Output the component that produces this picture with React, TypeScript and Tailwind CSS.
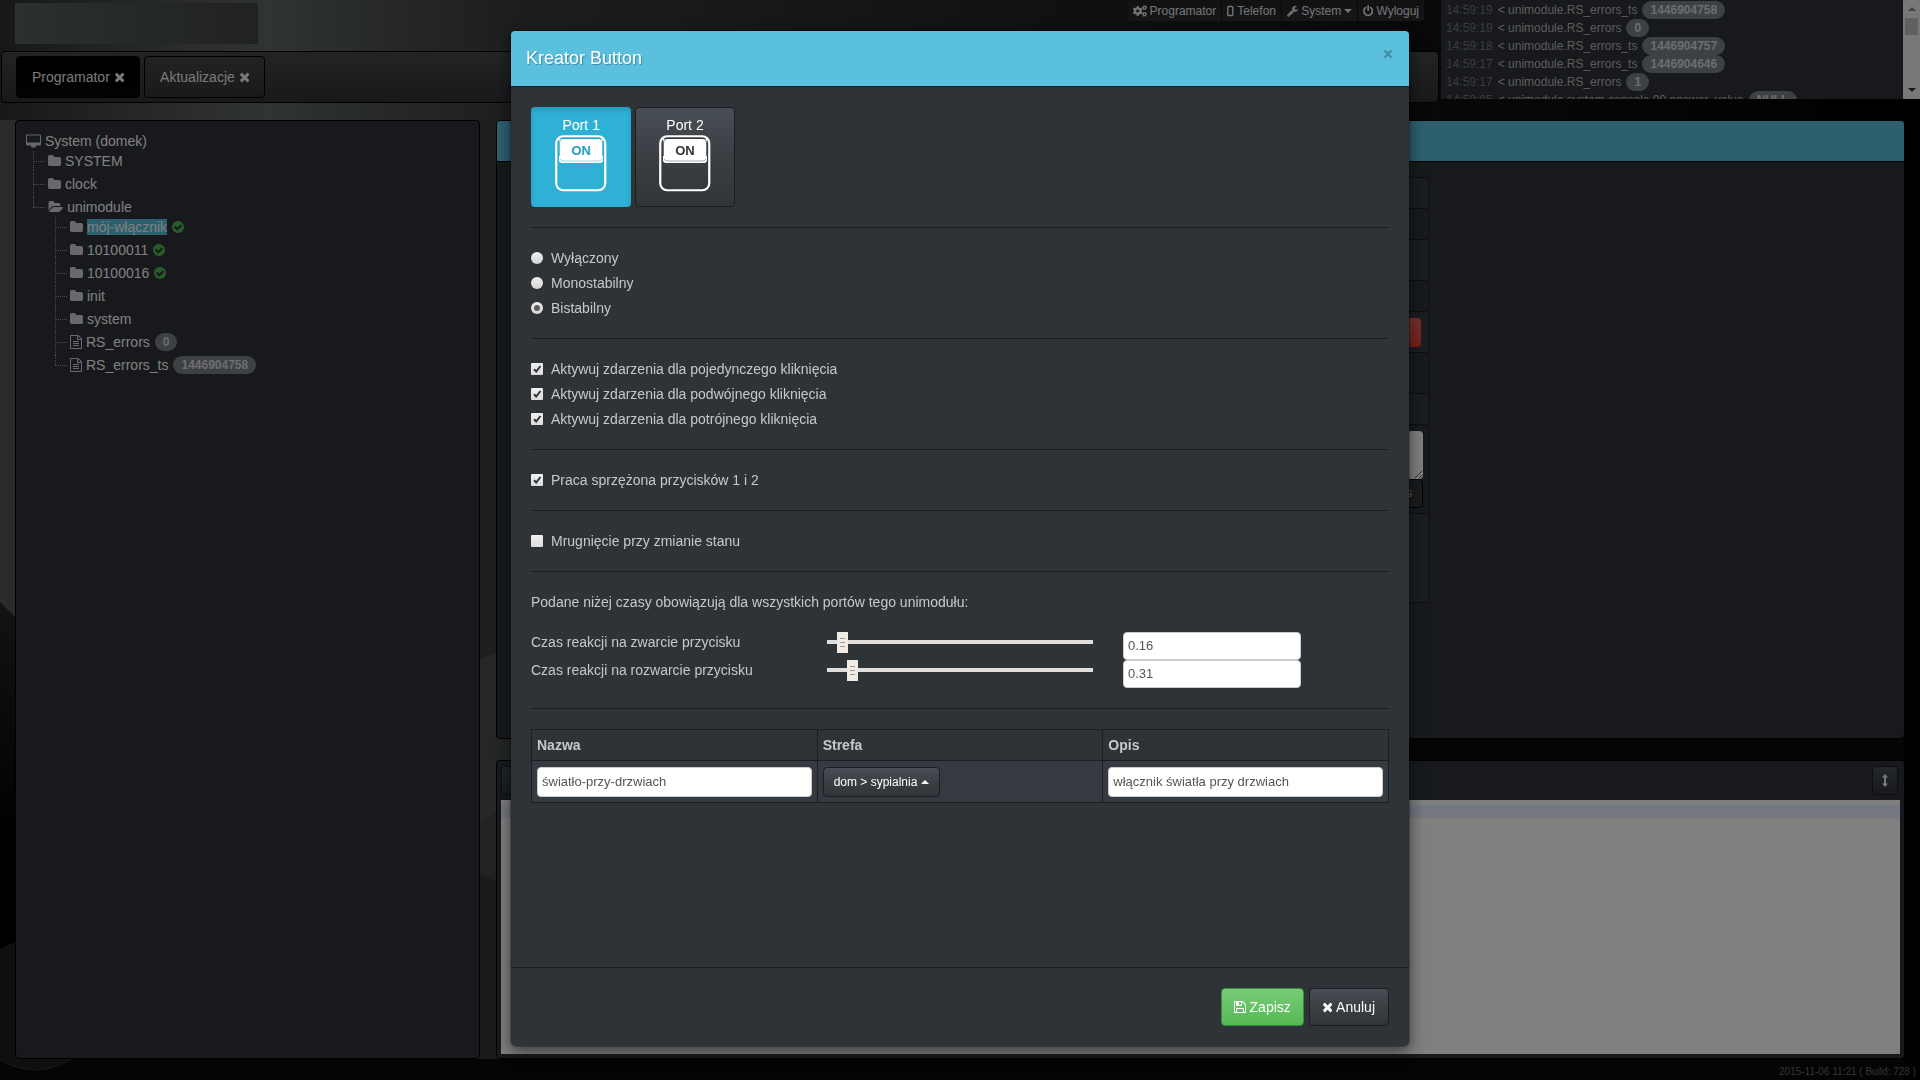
import React, { useState } from "react";
import { FaCogs } from "react-icons/fa";

const PATHS = {
  times:
    "M1490 1322q0 40-28 68l-136 136q-28 28-68 28t-68-28l-294-294-294 294q-28 28-68 28t-68-28l-136-136q-28-28-28-68t28-68l294-294-294-294q-28-28-28-68t28-68l136-136q28-28 68-28t68 28l294 294 294-294q28-28 68-28t68 28l136 136q28 28 28 68t-28 68l-294 294 294 294q28 28 28 68z",
  wrench:
    "M448 1472q0-26-19-45t-45-19-45 19-19 45 19 45 45 19 45-19 19-45zm644-420l-682 682q-37 37-90 37-52 0-91-37l-106-108q-38-36-38-90 0-53 38-91l681-681q39 98 114.500 173.500t173.500 114.500zm634-435q0 39-23 106-47 134-164.500 217.500t-258.500 83.500q-185 0-316.500-131.500t-131.500-316.500 131.500-316.500 316.500-131.500q58 0 121.500 16.500t107.500 46.500q16 11 16 28t-16 28l-293 169v224l193 107q5-3 79-48.500t135.500-81 70.500-35.500q15 0 23.500 10t8.500 25z",
  power:
    "M1664 896q0 156-61 298t-164 245-245 164-298 61-298-61-245-164-164-245-61-298q0-182 80.500-343t226.500-270q43-32 95.500-25t83.500 50q32 42 24.500 94.500t-49.500 84.500q-98 74-151.500 181t-53.500 228q0 104 40.500 198.500t109.500 163.500 163.500 109.500 198.500 40.500 198.500-40.500 163.500-109.500 109.500-163.500 40.500-198.500q0-121-53.500-228t-151.500-181q-42-32-49.500-84.500t24.500-94.500q31-43 84-50t95 25q146 109 226.500 270t80.500 343zm-640-768v640q0 52-38 90t-90 38-90-38-38-90v-640q0-52 38-90t90-38 90 38 38 90z",
  desktop:
    "M1728 992v-832q0-13-9.500-22.500t-22.500-9.500h-1600q-13 0-22.500 9.500t-9.500 22.500v832q0 13 9.500 22.500t22.500 9.500h1600q13 0 22.500-9.500t9.500-22.500zm128-832v1088q0 66-47 113t-113 47h-544q0 37 16 77.500t32 71 16 43.500q0 26-19 45t-45 19h-512q-26 0-45-19t-19-45q0-14 16-44t32-70 16-78h-544q-66 0-113-47t-47-113v-1088q0-66 47-113t113-47h1600q66 0 113 47t47 113z",
  folder:
    "M1728 608v704q0 92-66 158t-158 66h-1216q-92 0-158-66t-66-158v-960q0-92 66-158t158-66h320q92 0 158 66t66 158v32h672q92 0 158 66t66 158z",
  folderOpen:
    "M1943 952q0 31-31 66l-336 396q-43 51-120.500 86.500t-143.500 35.500h-1088q-34 0-60.500-13t-26.500-43q0-31 31-66l336-396q43-51 120.500-86.500t143.500-35.500h1088q34 0 60.500 13t26.500 43zm-343-344v160h-832q-94 0-197 47.500t-164 119.500l-337 396-5 6q0-4-.5-12.500t-.5-12.500v-960q0-92 66-158t158-66h320q92 0 158 66t66 158v32h544q92 0 158 66t66 158z",
  check:
    "M1412 734q0-28-18-46l-91-90q-19-19-45-19t-45 19l-408 407-226-226q-19-19-45-19t-45 19l-91 90q-18 18-18 46 0 27 18 45l362 362q19 19 45 19 27 0 46-19l543-543q18-18 18-45zm252 162q0 209-103 385.500t-279.500 279.500-385.500 103-385.500-103-279.500-279.500-103-385.500 103-385.500 279.500-279.500 385.500-103 385.500 103 279.500 279.500 103 385.500z",
  file:
    "M1596 380q28 28 48 76t20 88v1152q0 40-28 68t-68 28h-1344q-40 0-68-28t-28-68v-1600q0-40 28-68t68-28h896q40 0 88 20t76 48zm-444-244v376h376q-10-29-22-41l-313-313q-12-12-41-22zm384 1528v-1024h-416q-40 0-68-28t-28-68v-416h-768v1536h1280zm-1024-864q0-14 9-23t23-9h704q14 0 23 9t9 23v64q0 14-9 23t-23 9h-704q-14 0-23-9t-9-23v-64zm736 224q14 0 23 9t9 23v64q0 14-9 23t-23 9h-704q-14 0-23-9t-9-23v-64q0-14 9-23t23-9h704zm0 256q14 0 23 9t9 23v64q0 14-9 23t-23 9h-704q-14 0-23-9t-9-23v-64q0-14 9-23t23-9h704z",
  save:
    "M512 1536h768v-384h-768v384zm896 0h128v-896q0-14-10-38.500t-20-34.500l-281-281q-10-10-34-20t-39-10v416q0 40-28 68t-68 28h-576q-40 0-68-28t-28-68v-416h-128v1280h128v-416q0-40 28-68t68-28h832q40 0 68 28t28 68v416zm-384-928v-320q0-13-9.500-22.500t-22.500-9.500h-192q-13 0-22.500 9.500t-9.500 22.500v320q0 13 9.500 22.500t22.500 9.500h192q13 0 22.500-9.500t9.500-22.500zm640 32v928q0 40-28 68t-68 28h-1344q-40 0-68-28t-28-68v-1344q0-40 28-68t68-28h928q40 0 88 20t76 48l280 280q28 28 48 76t20 88z",
};

const VIEW: Record<keyof typeof PATHS, string> = {
  times: "302 0 1188 1792",
  wrench: "64 0 1664 1792",
  power: "128 0 1536 1792",
  desktop: "-64 -64 1920 1792",
  folder: "64 0 1664 1792",
  folderOpen: "0 0 1943 1792",
  check: "128 0 1536 1792",
  file: "128 0 1536 1792",
  save: "128 0 1536 1792",
};

function Glyph({ name, className = "h-3.5" }: { name: keyof typeof PATHS; className?: string }) {
  return (
    <svg viewBox={VIEW[name]} className={`w-auto shrink-0 fill-current ${className}`} aria-hidden="true">
      <path d={PATHS[name]} />
    </svg>
  );
}

function Badge({ children }: { children: React.ReactNode }) {
  return (
    <span className="rounded-full bg-[#7a8288] px-2 py-[3px] text-xs leading-3 font-bold text-[#d8dade]">{children}</span>
  );
}

function Backdrop() {
  return (
    <svg className="absolute inset-0 h-full w-full" viewBox="0 0 1920 1080" preserveAspectRatio="none" aria-hidden="true">
      <defs>
        <linearGradient id="top" x1="0" x2="1" y1="0" y2="0">
          <stop offset="0" stopColor="#2e3032" />
          <stop offset=".07" stopColor="#4a4d50" />
          <stop offset=".14" stopColor="#62676a" />
          <stop offset=".2" stopColor="#4c5052" />
          <stop offset=".27" stopColor="#3a3b3d" />
          <stop offset=".45" stopColor="#2a2a2b" />
          <stop offset=".75" stopColor="#101010" />
          <stop offset="1" stopColor="#000" />
        </linearGradient>
        <linearGradient id="dark" x1="0" x2="0" y1="0" y2="1">
          <stop offset="0" stopColor="#262728" />
          <stop offset=".5" stopColor="#000" />
          <stop offset="1" stopColor="#000" />
        </linearGradient>
      </defs>
      <rect width="1920" height="1080" fill="url(#top)" />
      <rect y="120" width="300" height="500" fill="#545858" />
      <path d="M0 602L16 618V1080H0Z" fill="url(#dark)" />
      <rect x="480" y="120" width="16" height="960" fill="#3c3e3f" />
      <path d="M480 659L496 653V812L480 824Z" fill="#4c5051" />
      <path d="M480 824L496 812V881L480 873Z" fill="#424646" />
      <path d="M480 873L496 881V1080H480Z" fill="#353637" />
      <rect x="488" y="738" width="300" height="22" fill="#484c4c" />
      <rect x="1300" y="738" width="620" height="22" fill="#0a0a0a" />
      <rect y="1059" width="1920" height="21" fill="#080809" />
      <rect x="1904" y="100" width="16" height="980" fill="#000" />
      <circle cx="35" cy="1005" r="65" fill="#1f1f20" stroke="#343435" />
    </svg>
  );
}

const TABS = [
  { label: "Programator", active: true },
  { label: "Aktualizacje", active: false },
];

const LOG: [string, string, string][] = [
  ["14:59:19", "unimodule.RS_errors_ts", "1446904758"],
  ["14:59:19", "unimodule.RS_errors", "0"],
  ["14:59:18", "unimodule.RS_errors_ts", "1446904757"],
  ["14:59:17", "unimodule.RS_errors_ts", "1446904646"],
  ["14:59:17", "unimodule.RS_errors", "1"],
  ["14:59:05", "unimodule.system.console.00.answer_value", "NULL"],
];

function TopBar() {
  const item = "flex h-[21px] items-center gap-[3px] border-r border-black/60 px-[5px] last:border-r-0";
  return (
    <header className="relative flex">
      <div className="flex min-w-0 flex-1 flex-col">
        <div className="flex h-[51px] items-start justify-between pr-[17px] pl-[15px]">
          <div className="mt-[3px] h-[41px] w-[243px] bg-linear-to-r from-[#5a5f61] via-[#4c5154] to-[#404346]" />
          <nav className="flex rounded-b bg-linear-to-b from-[#222325] to-[#2c2e31] text-xs text-[#e8e8e8]">
            <a href="#programator" className={item}>
              <FaCogs className="size-3.5" />
              Programator
            </a>
            <a href="#telefon" className={item}>
              <svg viewBox="0 0 7 12" className="h-3 w-[7px]" aria-hidden="true">
                <rect x=".75" y="1.5" width="5" height="9" rx="1" fill="none" stroke="currentColor" strokeWidth="1.4" />
              </svg>
              Telefon
            </a>
            <a href="#system" className={item}>
              <Glyph name="wrench" className="h-3" />
              System
              <span className="border-x-4 border-t-4 border-x-transparent border-t-current" />
            </a>
            <a href="#wyloguj" className={item}>
              <Glyph name="power" className="h-3" />
              Wyloguj
            </a>
          </nav>
        </div>
        <nav className="mr-[2px] ml-px flex h-[52px] gap-1 rounded border border-black bg-linear-to-b from-[#45474b] to-[#303235] px-3.5 py-1">
          {TABS.map((tab) => (
            <div
              key={tab.label}
              className={
                tab.active
                  ? "flex items-center gap-[5px] rounded border border-black bg-linear-to-b from-[#000] to-[#080808] px-[15px] text-sm text-[#f0f0f0]"
                  : "flex items-center gap-[5px] rounded border border-black px-[15px] text-sm text-[#f0f0f0]"
              }
            >
              <a href={`#${tab.label}`}>{tab.label}</a>
              <button type="button" aria-label={`Zamknij ${tab.label}`}>
                <Glyph name="times" />
              </button>
            </div>
          ))}
        </nav>
      </div>
      <section className="flex h-[99px] w-[479px] overflow-hidden bg-[#2e3338]">
        <ul className="min-w-0 flex-1 px-[5px] pt-px text-xs text-[#b8b8b8]">
          {LOG.map(([time, text, value], i) => (
            <li key={i} className="flex h-[18px] items-center gap-[5px] whitespace-nowrap">
              <span className="text-[#74787c]">{time}</span>
              <span>&lt; {text}</span>
              <Badge>{value}</Badge>
            </li>
          ))}
        </ul>
        <div className="flex w-[17px] flex-col items-center justify-between bg-[#f1f1f1] pb-[7px]" aria-hidden="true">
          <div className="flex flex-col items-center">
            <div className="flex h-[18px] items-center">
              <span className="border-x-4 border-b-4 border-x-transparent border-b-[#888]" />
            </div>
            <div className="h-[17px] w-[13px] bg-[#c1c1c1]" />
          </div>
          <span className="border-x-4 border-t-4 border-x-transparent border-t-[#333]" />
        </div>
      </section>
    </header>
  );
}

type Node = { name: string; icon: "folder" | "folderOpen" | "file"; ok?: boolean; value?: string; selected?: boolean; children?: Node[] };

const TREE: Node[] = [
  { name: "SYSTEM", icon: "folder" },
  { name: "clock", icon: "folder" },
  {
    name: "unimodule",
    icon: "folderOpen",
    children: [
      { name: "mój-włącznik", icon: "folder", ok: true, selected: true },
      { name: "10100011", icon: "folder", ok: true },
      { name: "10100016", icon: "folder", ok: true },
      { name: "init", icon: "folder" },
      { name: "system", icon: "folder" },
      { name: "RS_errors", icon: "file", value: "0" },
      { name: "RS_errors_ts", icon: "file", value: "1446904758" },
    ],
  },
];

function Branch({ nodes }: { nodes: Node[] }) {
  return (
    <ul className="pl-[7px]">
      {nodes.map((node) => (
        <li
          key={node.name}
          className="relative pb-[3px] pl-[15px] before:absolute before:top-0 before:left-0 before:h-full before:border-l before:border-dotted before:border-[#999] last:pb-0 last:before:h-2.5"
        >
          <div className="flex h-5 items-center gap-1 before:absolute before:top-2.5 before:left-0 before:w-3 before:border-t before:border-dotted before:border-[#999]">
            <span className="text-[#d4d0d6]">
              <Glyph name={node.icon} />
            </span>
            <span className={node.selected ? "bg-[#5bc0de] leading-4 text-white" : ""}>{node.name}</span>
            {node.ok && (
              <span className="ml-px text-[#52b552]">
                <Glyph name="check" />
              </span>
            )}
            {node.value && (
              <span className="ml-px flex">
                <Badge>{node.value}</Badge>
              </span>
            )}
          </div>
          {node.children && <Branch nodes={node.children} />}
        </li>
      ))}
    </ul>
  );
}

const PANEL = "rounded border border-black bg-[#2e3338]";
const CELL = "border border-[#1c1e22] pr-[5px]";

function Workspace() {
  return (
    <main className="relative flex flex-1 gap-4 px-[15px] pt-[17px]">
      <aside className={`${PANEL} w-[465px] shrink-0 px-2.5 py-2.5 text-sm text-white`}>
        <div className="flex h-5 items-center gap-1">
          <span className="text-[#d4d0d6]">
            <Glyph name="desktop" />
          </span>
          System (domek)
        </div>
        <Branch nodes={TREE} />
      </aside>
      <div className="flex min-w-0 flex-1 flex-col gap-[21px]">
        <section className={`${PANEL} h-[619px] overflow-hidden`}>
          <div className="h-[41px] border-b border-black bg-[#5bc0de]" />
          <table className="mt-[15px] ml-[19px] w-[913px] border-collapse">
            <tbody>
              <tr className="h-[31px] bg-[#353a41]"><td className={CELL} /></tr>
              <tr className="h-[31px]"><td className={CELL} /></tr>
              <tr className="h-[41px] bg-[#353a41]"><td className={CELL} /></tr>
              <tr className="h-[31px]"><td className={CELL} /></tr>
              <tr className="h-[41px] bg-[#353a41]">
                <td className={CELL}>
                  <button type="button" aria-label="Usuń" className="mr-0.5 ml-auto block h-[29px] w-28 rounded bg-linear-to-b from-[#ee6560] to-[#e83c38]" />
                </td>
              </tr>
              <tr className="h-[41px]"><td className={CELL} /></tr>
              <tr className="h-[31px] bg-[#353a41]"><td className={CELL} /></tr>
              <tr className="h-[89px]">
                <td className={CELL}>
                  <div className="flex flex-col">
                    <textarea aria-label="Opis" className="h-12 w-full rounded bg-white" />
                    <button type="button" className="h-[29px] w-28 self-end rounded border border-black bg-[#33363a] pr-2.5 text-right text-xs text-[#ccc]">
                      s
                    </button>
                  </div>
                </td>
              </tr>
              <tr className="h-[89px] bg-[#353a41]"><td className={CELL} /></tr>
            </tbody>
          </table>
        </section>
        <section className={`${PANEL} flex flex-1 flex-col px-1 pb-1`}>
          <div className="flex h-[39px] items-center justify-between pr-0.5">
            <button type="button" aria-label="Menu" className="h-[29px] w-[26px] rounded border border-[#1c1e22] bg-linear-to-b from-[#484e55] to-[#313539]" />
            <button
              type="button"
              aria-label="Rozciągnij"
              className="flex h-[29px] w-[26px] items-center justify-center rounded border border-[#1c1e22] bg-linear-to-b from-[#484e55] to-[#313539] text-[#f4f4f4]"
            >
              <svg viewBox="0 0 6 13" className="h-[13px] w-1.5 fill-current" aria-hidden="true">
                <path d="M3 0L6 3.500H4V9.500H6L3 13L0 9.500H2V3.500H0Z" />
              </svg>
            </button>
          </div>
          <div className="flex-1 bg-white pt-[5px]">
            <div className="h-[13px] bg-[#e8f2ff]" />
          </div>
        </section>
      </div>
    </main>
  );
}

function Switch({ ink }: { ink: string }) {
  return (
    <svg viewBox="0 0 52 57" className="h-[57px] w-[52px]" aria-hidden="true">
      <rect x="1.250" y="1.250" width="49" height="54" rx="7" fill="none" stroke="#fff" strokeWidth="2.200" />
      <path d="M4 4H48V25Q48 28 45 28H7Q4 28 4 25Z" fill="#fff" />
      <path d="M4.500 21V8Q4.500 3.500 9 3.500H43Q47.500 3.500 47.500 8V21" fill="none" stroke={ink} strokeWidth="1" opacity=".7" />
      <path d="M5 24Q6 26 9 26H43Q46 26 47 24" fill="none" stroke={ink} strokeWidth=".7" opacity=".6" />
      <text x="26" y="20" textAnchor="middle" fontSize="13" fontWeight="bold" fill={ink}>
        ON
      </text>
    </svg>
  );
}

function Choice({ type, label, on, onChange }: { type: "radio" | "checkbox"; label: string; on: boolean; onChange: () => void }) {
  return (
    <label className="flex h-5 items-center gap-2">
      <span className="relative flex size-3">
        <input
          type={type}
          name={type === "radio" ? "mode" : undefined}
          checked={on}
          onChange={onChange}
          className={
            type === "radio"
              ? "size-3 appearance-none rounded-full bg-linear-to-b from-[#f0f0f0] to-[#d4d4d4]"
              : "size-3 appearance-none rounded-[1px] bg-linear-to-b from-[#f0f0f0] to-[#dcdcdc]"
          }
        />
        {on && (
          <svg viewBox="0 0 12 12" className="pointer-events-none absolute inset-0 size-3" aria-hidden="true">
            {type === "radio" ? (
              <circle cx="6" cy="6" r="3" fill="#5c5c5c" />
            ) : (
              <path d="M3 6.200L5.200 8.500L9.500 3" fill="none" stroke="#333" strokeWidth="2" />
            )}
          </svg>
        )}
      </span>
      {label}
    </label>
  );
}

function Rule() {
  return <hr className="my-5 border-t border-[#1c1e22]" />;
}

const FIELD = "rounded border border-[#ccc] bg-white px-1 text-[13px] text-[#555]";
const TH = "h-[31px] border border-[#1c1e22] px-[5px] text-left font-bold";
const TD = "h-[42px] border border-[#1c1e22] px-[5px]";

function Delay({ id, label, value, onChange }: { id: string; label: string; value: string; onChange: (v: string) => void }) {
  return (
    <div className="grid h-7 grid-cols-3">
      <label htmlFor={id}>{label}</label>
      <div className="flex items-start px-2.5">
        <input
          type="range"
          min="0"
          max="4"
          step="0.01"
          aria-label={label}
          value={value}
          onChange={(e) => onChange(e.target.value)}
          className="h-5 w-full appearance-none bg-transparent [&::-webkit-slider-runnable-track]:h-1 [&::-webkit-slider-runnable-track]:bg-[#e0dedb] [&::-webkit-slider-thumb]:-mt-[8px] [&::-webkit-slider-thumb]:h-[21px] [&::-webkit-slider-thumb]:w-[11px] [&::-webkit-slider-thumb]:appearance-none [&::-webkit-slider-thumb]:border-x-[3px] [&::-webkit-slider-thumb]:border-y-[6px] [&::-webkit-slider-thumb]:border-[#f0ebe5] [&::-webkit-slider-thumb]:bg-[repeating-linear-gradient(#999_0_1px,#f0ebe5_1px_4px)] [&::-webkit-slider-thumb]:bg-origin-content"
        />
      </div>
      <div className="pl-5">
        <input id={id} value={value} onChange={(e) => onChange(e.target.value)} className={`${FIELD} block h-7 w-[178px] pb-0.5`} />
      </div>
    </div>
  );
}

const CLICKS = [
  "Aktywuj zdarzenia dla pojedynczego kliknięcia",
  "Aktywuj zdarzenia dla podwójnego kliknięcia",
  "Aktywuj zdarzenia dla potrójnego kliknięcia",
];
const MODES = ["Wyłączony", "Monostabilny", "Bistabilny"];

function Wizard() {
  const [port, setPort] = useState(1);
  const [mode, setMode] = useState("Bistabilny");
  const [clicks, setClicks] = useState([true, true, true]);
  const [paired, setPaired] = useState(true);
  const [blink, setBlink] = useState(false);
  const [closing, setClosing] = useState("0.16");
  const [opening, setOpening] = useState("0.31");

  return (
    <div className="fixed inset-0 flex items-start justify-center overflow-auto bg-black/50 pt-[30px]">
      <div
        role="dialog"
        aria-labelledby="wizard-title"
        className="w-[900px] max-w-full rounded-md border border-black/30 bg-[#2e3338] bg-clip-padding text-sm leading-5 text-[#c8c8c8] shadow-[0_5px_15px_rgba(0,0,0,0.5)]"
      >
        <div className="flex h-14 items-start justify-between rounded-t border-b border-[#1c1e22] bg-[#5bc0de] px-[15px] pt-[13px]">
          <h4 id="wizard-title" className="text-lg text-white [text-shadow:1px_1px_1px_rgba(0,0,0,0.3)]">
            Kreator Button
          </h4>
          <button type="button" aria-label="Zamknij" className="mr-px flex h-5 items-center text-[#3f8aa0]">
            <svg viewBox="0 0 10 10" className="size-2.5" aria-hidden="true">
              <path d="M1.500 1.500L8.500 8.500M8.500 1.500L1.500 8.500" stroke="currentColor" strokeWidth="2" />
            </svg>
          </button>
        </div>
        <div className="min-h-[880px] p-5">
          <div className="flex gap-1">
            {[1, 2].map((n) => (
              <button
                key={n}
                type="button"
                aria-pressed={port === n}
                onClick={() => setPort(n)}
                className={
                  port === n
                    ? "flex size-[100px] flex-col items-center rounded bg-[#2fb0d5] pt-2 text-sm leading-5 text-white shadow-[inset_0_3px_5px_rgba(0,0,0,0.125)]"
                    : "flex size-[100px] flex-col items-center rounded border border-[#1c1e22] bg-linear-to-b from-[#484e55] via-[#3a3f44] to-[#313539] pt-[7px] text-sm leading-5 text-white"
                }
              >
                Port {n}
                <Switch ink={port === n ? "#2a9fc0" : "#30343a"} />
              </button>
            ))}
          </div>
          <Rule />
          <div className="flex flex-col gap-[5px]">
            {MODES.map((m) => (
              <Choice key={m} type="radio" label={m} on={mode === m} onChange={() => setMode(m)} />
            ))}
          </div>
          <Rule />
          <div className="flex flex-col gap-[5px]">
            {CLICKS.map((c, i) => (
              <Choice key={c} type="checkbox" label={c} on={clicks[i]} onChange={() => setClicks(clicks.map((v, j) => (j === i ? !v : v)))} />
            ))}
          </div>
          <Rule />
          <Choice type="checkbox" label="Praca sprzężona przycisków 1 i 2" on={paired} onChange={() => setPaired(!paired)} />
          <Rule />
          <Choice type="checkbox" label="Mrugnięcie przy zmianie stanu" on={blink} onChange={() => setBlink(!blink)} />
          <Rule />
          <p className="mb-5">Podane niżej czasy obowiązują dla wszystkich portów tego unimodułu:</p>
          <Delay id="closing" label="Czas reakcji na zwarcie przycisku" value={closing} onChange={setClosing} />
          <Delay id="opening" label="Czas reakcji na rozwarcie przycisku" value={opening} onChange={setOpening} />
          <Rule />
          <table className="w-full table-fixed border-collapse">
            <thead>
              <tr>
                <th className={TH}>Nazwa</th>
                <th className={TH}>Strefa</th>
                <th className={TH}>Opis</th>
              </tr>
            </thead>
            <tbody>
              <tr className="bg-[#353a41]">
                <td className={TD}>
                  <input aria-label="Nazwa" defaultValue="światło-przy-drzwiach" className={`${FIELD} block h-[30px] w-full`} />
                </td>
                <td className={TD}>
                  <button
                    type="button"
                    className="flex h-[30px] items-center gap-1 rounded border border-[#1c1e22] bg-linear-to-b from-[#484e55] via-[#3a3f44] to-[#313539] px-2.5 text-xs text-white"
                  >
                    dom &gt; sypialnia
                    <span className="border-x-4 border-b-4 border-x-transparent border-b-white" />
                  </button>
                </td>
                <td className={TD}>
                  <input aria-label="Opis" defaultValue="włącznik światła przy drzwiach" className={`${FIELD} block h-[30px] w-full`} />
                </td>
              </tr>
            </tbody>
          </table>
        </div>
        <div className="flex justify-end gap-[5px] border-t border-[#1c1e22] px-5 py-5 text-white [text-shadow:1px_1px_1px_rgba(0,0,0,0.3)]">
          <button type="button" className="flex h-[38px] items-center gap-1 rounded border border-[#3d8b3d] bg-linear-to-b from-[#78cc78] to-[#53b953] px-3">
            <Glyph name="save" />
            Zapisz
          </button>
          <button
            type="button"
            className="flex h-[38px] items-center gap-1 rounded border border-[#1c1e22] bg-linear-to-b from-[#484e55] via-[#3a3f44] to-[#313539] px-[13px]"
          >
            <Glyph name="times" />
            Anuluj
          </button>
        </div>
      </div>
    </div>
  );
}

export default function App() {
  return (
    <div className="relative flex min-h-screen flex-col bg-black font-['Liberation_Sans',Arial,sans-serif]">
      <Backdrop />
      <TopBar />
      <Workspace />
      <footer className="relative flex h-[21px] items-end justify-end px-1 text-[10px] leading-4 text-[#6a6a6a]">2015-11-06 11:21 ( Build: 728 )</footer>
      <Wizard />
    </div>
  );
}
